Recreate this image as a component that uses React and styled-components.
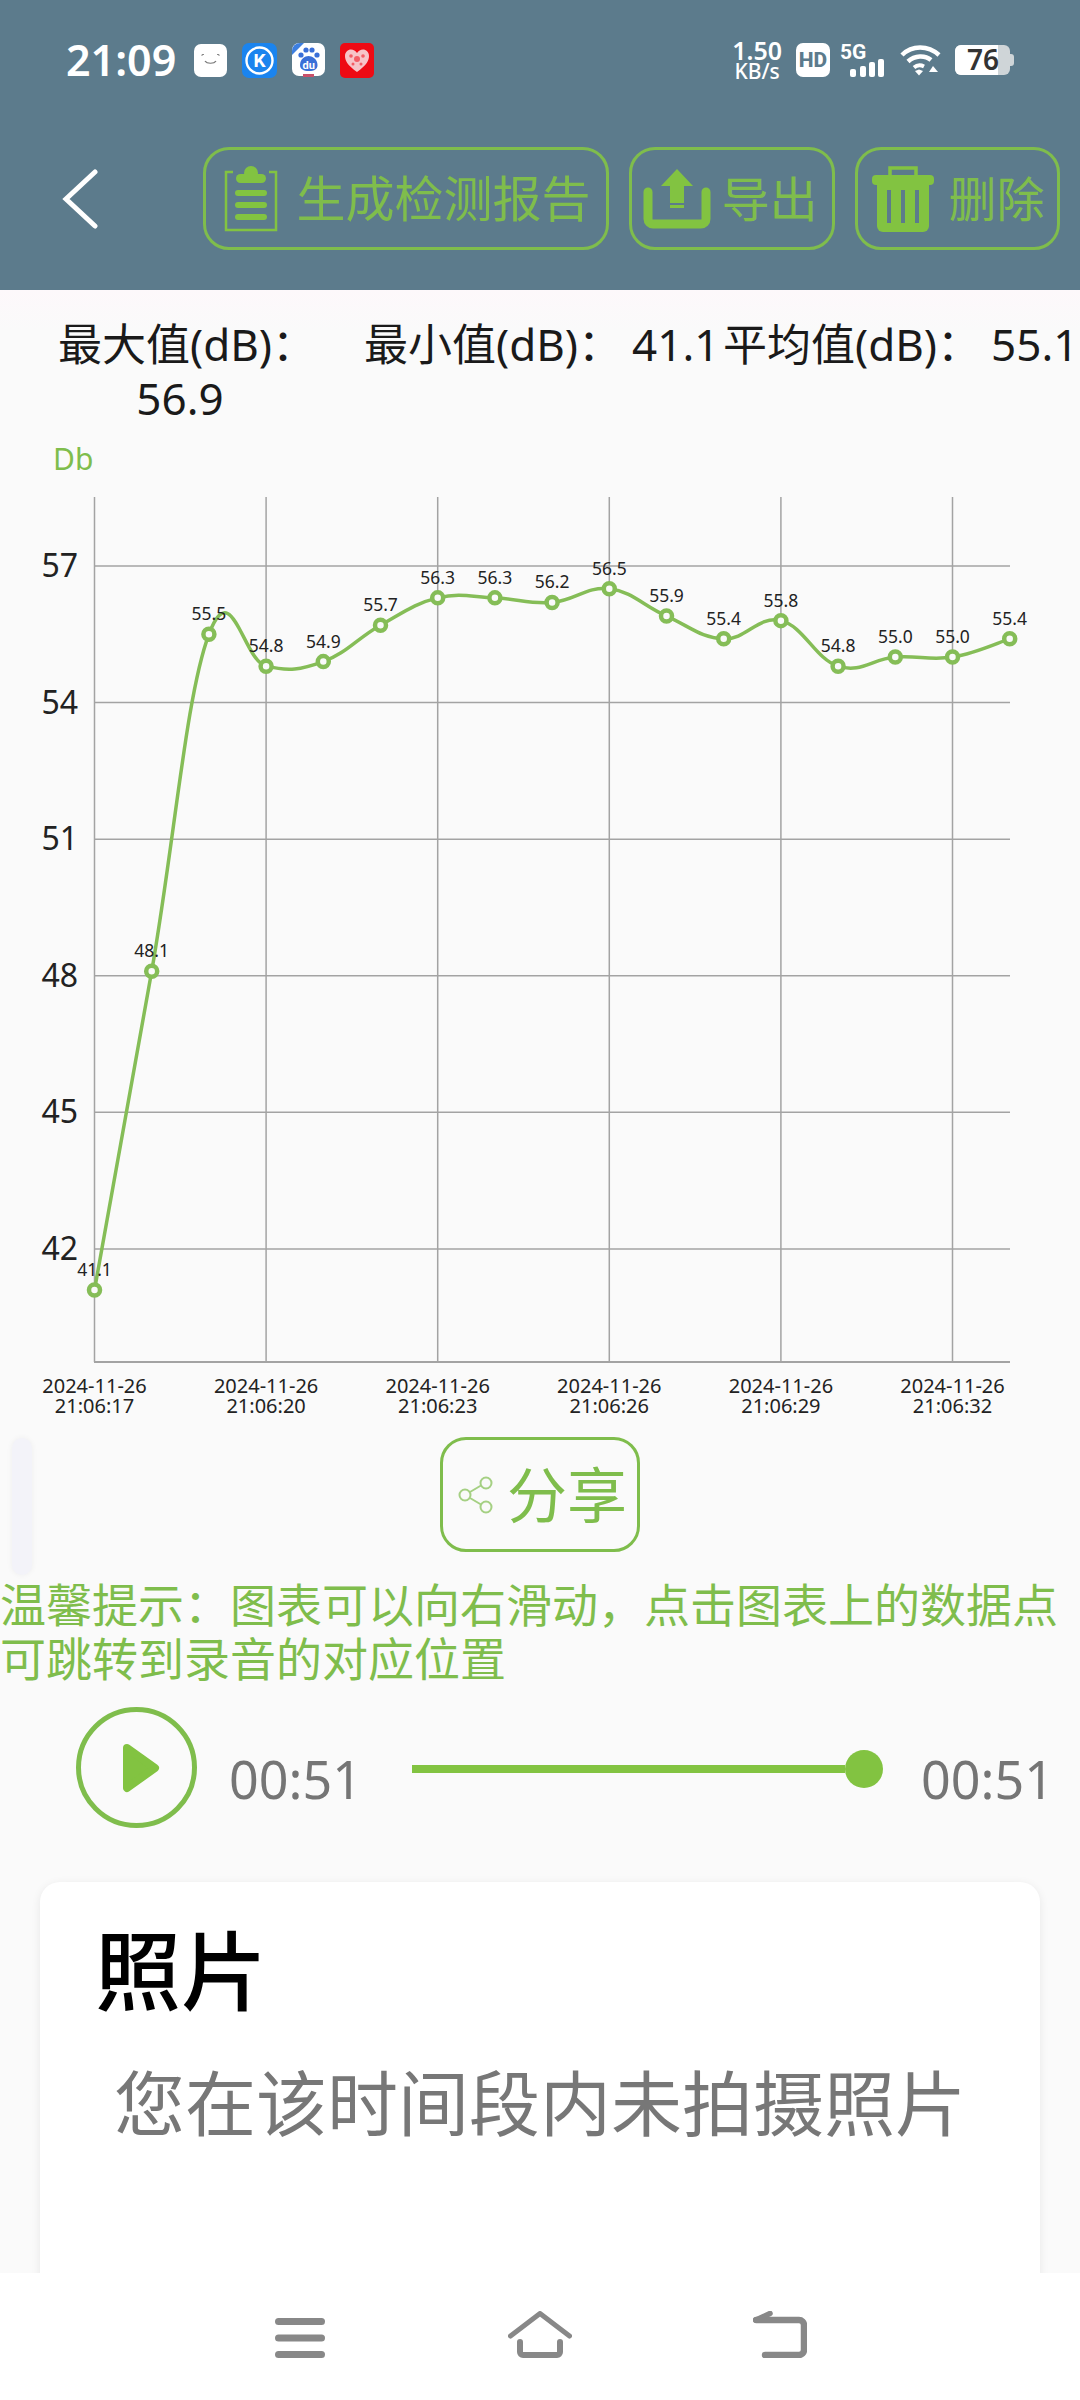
import React from 'react'
import styled, { createGlobalStyle } from 'styled-components'

const GREEN = '#7fbd4c'
const ICON_GREEN = '#82c341'
const BAR = '#5c7b8c'
const CJK = '"Noto Sans", "Noto Sans CJK SC", sans-serif'

const GlobalStyle = createGlobalStyle`
  html, body {
    margin: 0;
    padding: 0;
    background: #fafafa;
    font-family: ${CJK};
  }
`

const VALUES = [41.1, 48.1, 55.5, 54.8, 54.9, 55.7, 56.3, 56.3, 56.2, 56.5, 55.9, 55.4, 55.8, 54.8, 55.0, 55.0, 55.4]
const Y_TICKS = [57, 54, 51, 48, 45, 42]
const X_TICKS = ['21:06:17', '21:06:20', '21:06:23', '21:06:26', '21:06:29', '21:06:32']

const xOf = (i) => 94.5 + i * 57.2
const yOf = (v) => 566 + (57 - v) * 45.53

// catmull-rom style smoothing, the chart lib overshoots the same way
function smoothPath(points, k = 0.2) {
  let d = `M${points[0][0]} ${points[0][1]}`
  for (let i = 0; i < points.length - 1; i++) {
    const p0 = points[i - 1] || points[i]
    const p1 = points[i]
    const p2 = points[i + 1]
    const p3 = points[i + 2] || p2
    const c1x = p1[0] + (p2[0] - p0[0]) * k
    const c1y = p1[1] + (p2[1] - p0[1]) * k
    const c2x = p2[0] - (p3[0] - p1[0]) * k
    const c2y = p2[1] - (p3[1] - p1[1]) * k
    d += ` C${c1x} ${c1y} ${c2x} ${c2y} ${p2[0]} ${p2[1]}`
  }
  return d
}

function AppIcons() {
  return (
    <AppIconRow>
      <svg width="33" height="33" viewBox="0 0 33 33">
        <rect width="33" height="33" rx="7" fill="#fff" />
        <path d="M11 17c2 3 9 3 11 0" fill="none" stroke="#777" strokeWidth="1.2" />
        <path d="M8 12v-1.5h2M25 12v-1.5h-2" fill="none" stroke="#888" strokeWidth="1" />
      </svg>
      <svg width="35" height="35" viewBox="0 0 35 35">
        <rect width="35" height="35" rx="7" fill="#1b84ee" />
        <circle cx="17.5" cy="17.5" r="13" fill="none" stroke="#fff" strokeWidth="2.4" />
        <text x="17.5" y="24" textAnchor="middle" fontSize="19" fontWeight="700" fill="#fff" fontFamily="Roboto, sans-serif">K</text>
      </svg>
      <svg width="33" height="34" viewBox="0 0 33 34">
        <rect width="33" height="33" rx="7" fill="#fff" />
        <path d="M0 8a8 8 0 0 1 8-8h4L0 12z" fill="#3d7fe0" />
        <circle cx="9" cy="12" r="2.6" fill="#3a6fd8" />
        <circle cx="14" cy="7" r="2.6" fill="#3a6fd8" />
        <circle cx="20" cy="7" r="2.6" fill="#3a6fd8" />
        <circle cx="25" cy="12" r="2.6" fill="#3a6fd8" />
        <path d="M8 22c0-6 5-9 8.5-9s9 3 9 9c0 4-3 6-8.5 6s-9-2-9-6z" fill="#3a6fd8" />
        <text x="16.8" y="26" textAnchor="middle" fontSize="11" fontWeight="700" fill="#fff" fontFamily="Roboto, sans-serif">du</text>
        <rect x="11" y="31" width="11" height="3" fill="#c8506a" />
      </svg>
      <svg width="34" height="35" viewBox="0 0 34 35">
        <rect width="34" height="35" rx="5" fill="#ee0a14" />
        <path d="M17 29C7 22 5 17 5 13c0-4 3-6.5 6-6.5 2.5 0 4.5 1.2 6 3.5 1.5-2.3 3.5-3.5 6-3.5 3 0 6 2.5 6 6.5 0 4-2 9-12 16z" fill="#f7c4c8" />
        <circle cx="17" cy="16" r="3" fill="#ee0a14" opacity="0.55" />
        <circle cx="11" cy="13" r="1.8" fill="#ee0a14" opacity="0.55" />
        <circle cx="23" cy="13" r="1.8" fill="#ee0a14" opacity="0.55" />
        <circle cx="13" cy="21" r="1.5" fill="#ee0a14" opacity="0.55" />
        <circle cx="21" cy="21" r="1.5" fill="#ee0a14" opacity="0.55" />
      </svg>
    </AppIconRow>
  )
}

function SystemIcons() {
  return (
    <SystemRow>
      <NetSpeed>
        <strong>1.50</strong>
        <span>KB/s</span>
      </NetSpeed>
      <svg width="34" height="34" viewBox="0 0 34 34">
        <rect width="34" height="34" rx="7" fill="#fff" />
        <text x="17" y="24" textAnchor="middle" fontSize="21" fontWeight="800" fill={BAR} fontFamily="Roboto, sans-serif">HD</text>
      </svg>
      <SignalIcon width="46" height="36" viewBox="0 0 46 36">
        <text x="0" y="17" fontSize="21" fontWeight="700" fill="#fff" fontFamily="Roboto, sans-serif">5G</text>
        <rect x="10" y="27" width="6" height="8" rx="2" fill="#fff" />
        <rect x="20" y="24" width="6" height="11" rx="2" fill="#fff" />
        <rect x="29" y="20" width="6" height="15" rx="2" fill="#fff" />
        <rect x="38" y="17" width="6" height="18" rx="2" fill="#fff" />
      </SignalIcon>
      <svg width="41" height="32" viewBox="0 0 41 32">
        <path d="M2 11C12 1 28 1 39 11" fill="none" stroke="#fff" strokeWidth="4.5" />
        <path d="M8 17.5C15 11 25 11 31 16" fill="none" stroke="#fff" strokeWidth="4.5" />
        <path d="M14 23.5C17 21 21 21 24 22.5" fill="none" stroke="#fff" strokeWidth="4" />
        <path d="M15 27l4-1.5 4 1.5-4 4.5z" fill="#fff" />
        <path d="M33 22l5 6h-9z" fill="#fff" />
      </svg>
      <svg width="59" height="30" viewBox="0 0 59 30">
        <rect width="55" height="30" rx="6" fill="#cfd5d8" />
        <path d="M6 0h37v30H6a6 6 0 0 1-6-6V6a6 6 0 0 1 6-6z" fill="#fff" />
        <path d="M55 9h1a3 3 0 0 1 3 3v6a3 3 0 0 1-3 3h-1z" fill="#cfd5d8" />
        <text x="28" y="25" textAnchor="middle" fontSize="28" fontWeight="600" fill="#333" fontFamily='"Noto Sans", sans-serif'>76</text>
      </svg>
    </SystemRow>
  )
}

function ClipboardIcon() {
  return (
    <svg width="54" height="66" viewBox="0 0 54 66">
      <path d="M9 6H2v58h50V6h-7" fill="none" stroke={ICON_GREEN} strokeWidth="2.5" />
      <circle cx="27" cy="7" r="7" fill={ICON_GREEN} />
      <rect x="12" y="8" width="30" height="9" rx="4.5" fill={ICON_GREEN} />
      <rect x="11" y="24" width="32" height="6" rx="3" fill={ICON_GREEN} />
      <rect x="11" y="36" width="32" height="6" rx="3" fill={ICON_GREEN} />
      <rect x="11" y="48" width="32" height="6" rx="3" fill={ICON_GREEN} />
    </svg>
  )
}

function ExportIcon() {
  return (
    <svg width="68" height="60" viewBox="0 0 68 60">
      <path d="M5 23v27a5 5 0 0 0 5 5h48a5 5 0 0 0 5-5V23" fill="none" stroke={ICON_GREEN} strokeWidth="9" strokeLinecap="round" />
      <path d="M34 0l16 17H41v17H27V17H18z" fill={ICON_GREEN} />
      <rect x="27" y="36" width="14" height="3" fill={ICON_GREEN} />
    </svg>
  )
}

function TrashIcon() {
  return (
    <svg width="62" height="67" viewBox="0 0 62 67">
      <path d="M18 12V3h26v9" fill="none" stroke={ICON_GREEN} strokeWidth="3.5" />
      <rect y="10" width="62" height="10" rx="4" fill={ICON_GREEN} />
      <path d="M5 20h52v41a6 6 0 0 1-6 6H11a6 6 0 0 1-6-6z" fill={ICON_GREEN} />
      <rect x="15" y="25" width="4" height="33" fill={BAR} />
      <rect x="29" y="25" width="4" height="33" fill={BAR} />
      <rect x="43" y="25" width="4" height="33" fill={BAR} />
    </svg>
  )
}

function ShareIcon() {
  return (
    <svg width="35" height="38" viewBox="0 0 35 38" fill="none" stroke="#a5d083" strokeWidth="2">
      <circle cx="28" cy="7" r="5.5" />
      <circle cx="7" cy="19" r="5.5" />
      <circle cx="28" cy="31" r="5.5" />
      <path d="M12 16l11-6.5M12 22l11 6.5" />
    </svg>
  )
}

function Chart() {
  const points = VALUES.map((v, i) => [xOf(i), yOf(v)])
  return (
    <ChartSvg viewBox="0 440 1080 992">
      <text x="53" y="470" fontSize="30" fill={GREEN}>Db</text>
      <g stroke="#a3a3a3" strokeWidth="1.5">
        {X_TICKS.map((_, i) => (
          <line key={i} x1={xOf(i * 3)} x2={xOf(i * 3)} y1="497" y2="1362" />
        ))}
        {Y_TICKS.map((t) => (
          <line key={t} x1="94" x2="1010" y1={yOf(t)} y2={yOf(t)} />
        ))}
        <line x1="94" x2="1010" y1="1362" y2="1362" strokeWidth="2" />
      </g>
      {Y_TICKS.map((t) => (
        <text key={t} x="78" y={yOf(t) + 11} textAnchor="end" fontSize="32" fill="#222">{t}</text>
      ))}
      <path d={smoothPath(points)} fill="none" stroke="#85bd57" strokeWidth="3.5" />
      {points.map(([x, y], i) => (
        <g key={i}>
          <circle cx={x} cy={y} r="5.5" fill="#fafafa" stroke="#85bd57" strokeWidth="4.5" />
          <text x={x} y={y - 14} textAnchor="middle" fontSize="17.5" fill="#222">{VALUES[i].toFixed(1)}</text>
        </g>
      ))}
      {X_TICKS.map((t, i) => (
        <text key={t} textAnchor="middle" fontSize="20" fill="#222">
          <tspan x={xOf(i * 3)} y="1393">2024-11-26</tspan>
          <tspan x={xOf(i * 3)} y="1413">{t}</tspan>
        </text>
      ))}
    </ChartSvg>
  )
}

export default function App() {
  return (
    <>
      <GlobalStyle />
      <Page>
        <Header>
          <StatusBar>
            <Clock>21:09</Clock>
            <AppIcons />
            <SystemIcons />
          </StatusBar>
          <Toolbar>
            <BackLink>
              <svg width="37" height="60" viewBox="0 0 37 60">
                <path d="M33 3L4 30l29 27" fill="none" stroke="#fff" strokeWidth="5" strokeLinecap="round" />
              </svg>
            </BackLink>
            <ToolButton $width={406} $gap={19} $size={49}>
              <ClipboardIcon />
              <span>生成检测报告</span>
            </ToolButton>
            <ToolButton $width={206} $gap={11} $pad={11}>
              <ExportIcon />
              <span>导出</span>
            </ToolButton>
            <ToolButton $width={205} $gap={15} $pad={14}>
              <TrashIcon />
              <span>删除</span>
            </ToolButton>
          </Toolbar>
        </Header>

        <Summary>
          <MaxStat>
            最大值(dB)：
            <MaxValue>56.9</MaxValue>
          </MaxStat>
          <Stat $width={359}>
            最小值(dB)：<Reading>41.1</Reading>
          </Stat>
          <Stat>
            平均值(dB)：<Reading>55.1</Reading>
          </Stat>
        </Summary>

        <Chart />

        <ShareRow>
          <ShareButton>
            <ShareIcon />
            <span>分享</span>
          </ShareButton>
        </ShareRow>

        <Hint>
          温馨提示：图表可以向右滑动，点击图表上的数据点
          <br />
          可跳转到录音的对应位置
        </Hint>

        <Player>
          <PlayButton>
            <svg width="38" height="50" viewBox="0 0 38 50">
              <path d="M5 5l28 20L5 45z" fill={ICON_GREEN} stroke={ICON_GREEN} strokeWidth="8" strokeLinejoin="round" />
            </svg>
          </PlayButton>
          <Time>00:51</Time>
          <Slider>
            <SliderFill />
            <SliderThumb />
          </Slider>
          <Time>00:51</Time>
        </Player>

        <PhotoCard>
          <CardTitle>照片</CardTitle>
          <CardEmpty>您在该时间段内未拍摄照片</CardEmpty>
        </PhotoCard>

        <FloatHandle />

        <NavBar>
          <NavCell>
            <svg width="50" height="47" viewBox="0 0 50 47" fill="#888">
              <rect y="7" width="50" height="7" rx="3.5" />
              <rect y="23.5" width="50" height="7" rx="3.5" />
              <rect y="40" width="50" height="7" rx="3.5" />
            </svg>
          </NavCell>
          <NavCell>
            <svg width="64" height="47" viewBox="0 0 64 47" fill="none" stroke="#888" strokeLinecap="round" strokeLinejoin="round">
              <path d="M2.5 25L32 2.5 61.5 25" strokeWidth="5" />
              <path d="M12 31v10a3 3 0 0 0 3 3h34a3 3 0 0 0 3-3V31" strokeWidth="6" />
            </svg>
          </NavCell>
          <NavCell>
            <svg width="54" height="47" viewBox="0 0 54 47" fill="none" stroke="#888" strokeLinecap="round" strokeLinejoin="round">
              <path d="M12 44h34a5 5 0 0 0 5-5V14a5 5 0 0 0-5-5H3" strokeWidth="6.5" />
              <path d="M3 9l14-6.5" strokeWidth="5.5" />
            </svg>
          </NavCell>
        </NavBar>
      </Page>
    </>
  )
}

const Page = styled.div`
  position: relative;
  width: 1080px;
  height: 2400px;
  overflow: hidden;
  background: #fafafa;
  color: #1a1a1a;
`
const Header = styled.header`
  height: 290px;
  background: ${BAR};
`
const StatusBar = styled.div`
  display: flex;
  align-items: center;
  height: 120px;
  padding: 0 66px;
`
const Clock = styled.span`
  width: 128px;
  color: #fff;
  font-size: 43px;
  font-weight: 600;
  line-height: 120px;
`
const AppIconRow = styled.div`
  display: flex;
  align-items: center;
  gap: 15px;
`
const SystemRow = styled.div`
  display: flex;
  align-items: center;
  gap: 14px;
  margin-left: auto;
`
const SignalIcon = styled.svg`
  margin-left: -4px;
`
const NetSpeed = styled.div`
  display: flex;
  flex-direction: column;
  align-items: center;
  color: #fff;
  strong {
    font-size: 25px;
    font-weight: 600;
    line-height: 22px;
  }
  span {
    font-size: 21px;
    font-weight: 500;
    line-height: 20px;
  }
`
const Toolbar = styled.div`
  display: flex;
  align-items: center;
  gap: 20px;
  padding-top: 27px;
`
const BackLink = styled.div`
  display: flex;
  align-items: center;
  flex: none;
  box-sizing: border-box;
  width: 182.5px;
  padding-left: 62px;
`
const ToolButton = styled.div`
  display: flex;
  align-items: center;
  flex: none;
  gap: ${(p) => p.$gap}px;
  box-sizing: border-box;
  width: ${(p) => p.$width}px;
  height: 103px;
  padding-left: ${(p) => p.$pad || 18}px;
  border: 3px solid ${GREEN};
  border-radius: 26px;
  color: ${GREEN};
  font-size: ${(p) => p.$size || 48}px;
  line-height: 1;
  white-space: nowrap;
`
const Summary = styled.section`
  display: flex;
  box-sizing: border-box;
  height: 150px;
  padding-top: 27px;
  background: linear-gradient(#fdf8fb, #fafafa 40px);
  font-size: 44px;
  line-height: 54px;
  white-space: nowrap;
  color: #1a1a1a;
`
const MaxStat = styled.div`
  flex: none;
  box-sizing: border-box;
  width: 364px;
  padding-left: 58px;
`
const Stat = styled.div`
  flex: none;
  width: ${(p) => (p.$width ? `${p.$width}px` : 'auto')};
`
const Reading = styled.span`
  margin-left: 10px;
`
const MaxValue = styled.div`
  width: 244px;
  text-align: center;
`
const ChartSvg = styled.svg`
  display: block;
  width: 1080px;
  height: 992px;
  text {
    font-family: ${CJK};
  }
`
const ShareRow = styled.div`
  display: flex;
  justify-content: center;
`
const ShareButton = styled.div`
  display: flex;
  align-items: center;
  gap: 14px;
  box-sizing: border-box;
  width: 200px;
  height: 115px;
  margin-top: 5px;
  padding-left: 15px;
  border: 3px solid ${GREEN};
  border-radius: 26px;
  color: ${GREEN};
  font-size: 60px;
  line-height: 1;
  white-space: nowrap;
`
const Hint = styled.p`
  margin: 25px 0 0;
  color: ${GREEN};
  font-size: 46px;
  line-height: 54px;
  white-space: nowrap;
`
const Player = styled.div`
  display: flex;
  align-items: flex-start;
  height: 121px;
  margin-top: 22px;
  padding-left: 76px;
`
const PlayButton = styled.div`
  display: flex;
  align-items: center;
  justify-content: center;
  box-sizing: border-box;
  width: 121px;
  height: 121px;
  padding-left: 8px;
  margin-right: 32px;
  border: 5px solid ${GREEN};
  border-radius: 50%;
`
const Time = styled.span`
  width: 125px;
  margin-top: 38px;
  color: #757575;
  font-size: 52px;
  line-height: 68px;
  white-space: nowrap;
`
const Slider = styled.div`
  display: flex;
  align-items: center;
  width: 471px;
  height: 38px;
  margin: 43px 38px 0 58px;
`
const SliderFill = styled.div`
  flex: 1;
  height: 8px;
  background: ${ICON_GREEN};
`
const SliderThumb = styled.div`
  width: 38px;
  height: 38px;
  border-radius: 50%;
  background: ${ICON_GREEN};
`
const PhotoCard = styled.section`
  box-sizing: border-box;
  height: 560px;
  margin: 54px 40px 0;
  padding: 37px 55px 0;
  border-radius: 20px;
  background: #fff;
  box-shadow: 0 2px 10px rgba(0, 0, 0, 0.08);
`
const CardTitle = styled.h2`
  margin: 0;
  color: #000;
  font-size: 86px;
  font-weight: 500;
  line-height: 104px;
`
const CardEmpty = styled.p`
  margin: 35px -20px 0;
  color: #777;
  font-size: 71px;
  line-height: 90px;
  text-align: center;
  white-space: nowrap;
`
const FloatHandle = styled.div`
  position: absolute;
  left: 12px;
  top: 1438px;
  width: 20px;
  height: 137px;
  border-radius: 10px;
  background: #f3f3f9;
  box-shadow: 0 0 6px rgba(0, 0, 0, 0.05);
`
const NavBar = styled.nav`
  position: absolute;
  left: 0;
  right: 0;
  bottom: 0;
  display: grid;
  grid-template-columns: repeat(3, 240px);
  justify-content: center;
  height: 127px;
  padding-top: 38px;
  box-sizing: border-box;
  background: #fff;
`
const NavCell = styled.div`
  display: flex;
  justify-content: center;
`
